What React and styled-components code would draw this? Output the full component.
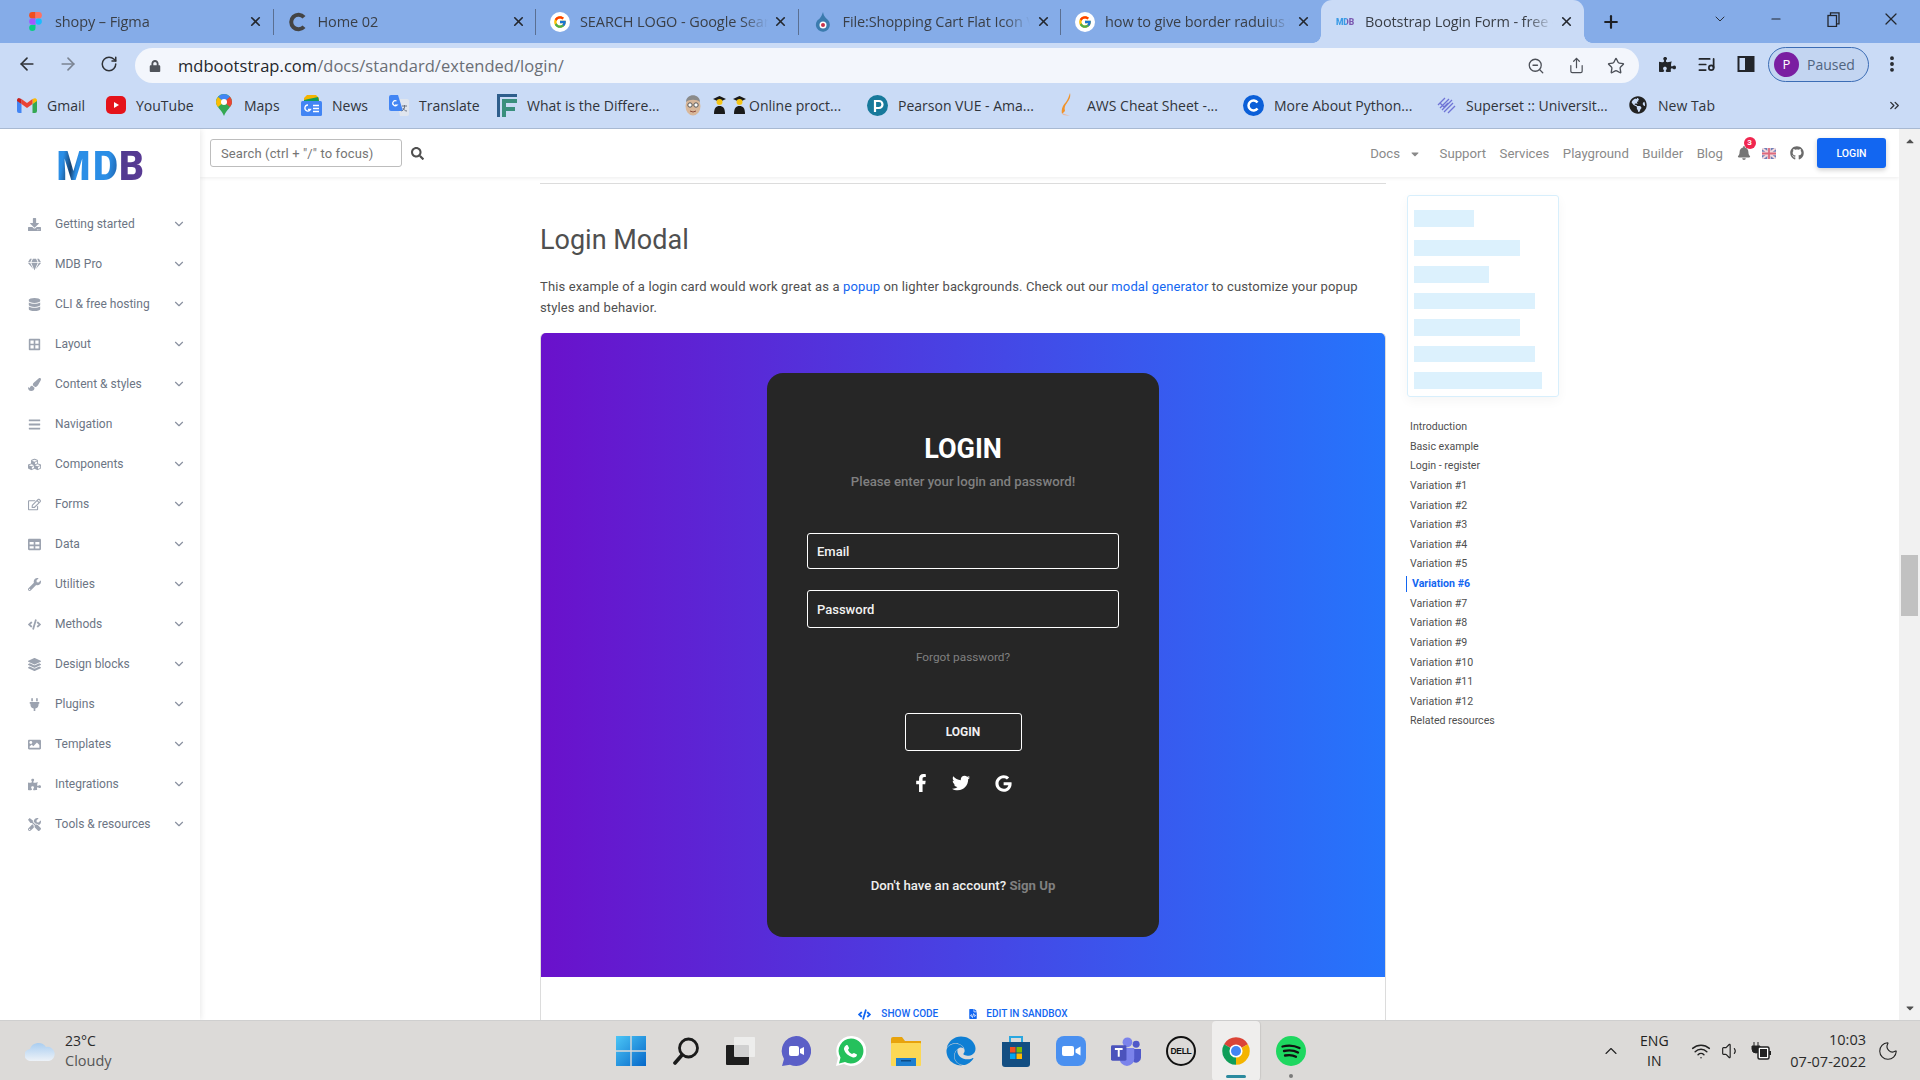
import React from "react";
import styled, { createGlobalStyle } from "styled-components";
import { ArrowLeft, ArrowRight, RotateCw, ZoomOut, Star, ListMusic, EllipsisVertical, ChevronDown, ChevronUp, X, Plus, Minus, Wifi, Volume1, Moon, ChevronsRight, Share } from "lucide-react";
import { FaDownload, FaGem, FaDatabase, FaBorderAll, FaPaintBrush, FaBars, FaCubes, FaRegEdit, FaTable, FaWrench, FaCode, FaLayerGroup, FaPlug, FaImage, FaPuzzlePiece, FaTools, FaSearch, FaBell, FaGithub, FaFacebookF, FaTwitter, FaGoogle, FaFileCode, FaCaretDown, FaCaretUp, FaLock, FaEdge, FaGlobeAmericas } from "react-icons/fa";
import { FcGoogle } from "react-icons/fc";

const UI = `"Open Sans", "Noto Sans", sans-serif`;
const RB = `Roboto, "Liberation Sans", sans-serif`;

const Global = createGlobalStyle`
  html, body { margin: 0; padding: 0; overflow: hidden; background: #fff; }
  * { box-sizing: border-box; }
`;
const Frame = styled.div`
  width: 1920px; height: 1080px; display: flex; flex-direction: column; overflow: hidden;
  font-family: ${RB};
`;

/* ---------- Chrome tabs ---------- */
const TabBar = styled.div`
  height: 43px; flex: none; background: #85ace8; display: flex; align-items: stretch; padding-left: 11px;
`;
const Tab = styled.div`
  position: relative; flex: 0 0 ${p => p.$w || 262.5}px; min-width: 0; display: flex; align-items: center; padding: 0 9px 0 14px;
  background: ${p => (p.$active ? "#cadbf6" : "transparent")};
  border-radius: ${p => (p.$active ? "11px 11px 0 0" : "0")};
  &::after {
    content: ""; position: absolute; right: 0; top: 9px; bottom: 8px; width: 1px;
    background: ${p => (p.$sep ? "#5a6f92" : "transparent")};
  }
  ${p => p.$active ? `
    &::before { content: ""; position: absolute; left: -8px; bottom: 0; width: 8px; height: 8px; background: radial-gradient(circle at 0 0, transparent 7.5px, #cadbf6 8px); }
    &::after { left: 100%; right: auto; top: auto; bottom: 0; width: 8px; height: 8px; background: radial-gradient(circle at 100% 0, transparent 7.5px, #cadbf6 8px); }
  ` : ""}
`;
const TabIcon = styled.span`
  flex: 0 0 20px; height: 20px; display: flex; align-items: center; justify-content: center; margin-right: 10px;
`;
const TabTitle = styled.span`
  flex: 1; min-width: 0; white-space: nowrap; overflow: hidden; font: 400 14.5px ${UI}; letter-spacing: -0.1px; color: #3a3f47;
  -webkit-mask-image: linear-gradient(to right, #000 86%, transparent 100%);
  mask-image: linear-gradient(to right, #000 86%, transparent 100%);
`;
const TabClose = styled.span`
  flex: 0 0 18px; display: flex; justify-content: center; margin-left: 4px; color: #23272e;
`;
const NewTab = styled.span`
  flex: 0 0 54px; display: flex; align-items: center; justify-content: center; color: #1d2026;
`;
const WinControls = styled.div`
  margin-left: auto; display: flex; align-items: center; color: #23272e; padding: 0 19px 5px 0;
`;
const WinBtn = styled.span`
  display: flex; justify-content: center; width: 20px; margin-left: ${p => p.$ml || 36}px;
`;

/* ---------- Toolbar ---------- */
const Toolbar = styled.div`
  height: 42px; flex: none; background: #cadbf6; display: flex; align-items: center; padding: 0 0 0 17px;
`;
const NavBtn = styled.span`
  flex: 0 0 20px; display: flex; justify-content: center; margin-right: 21px; color: ${p => p.$dim ? "#7b8493" : "#2f3237"};
`;
const UrlPill = styled.div`
  height: 35px; width: 1504px; margin: 5px 0 2px -5px; border-radius: 18px; background: #f3f6fc; display: flex; align-items: center; padding: 0 13px 0 14px;
`;
const Lock = styled.span`
  display: flex; color: #50545b; width: 29px;
`;
const Url = styled.span`
  font: 400 16.5px ${UI}; letter-spacing: 0.05px; color: #6a6e75; flex: 1;
  b { font-weight: 400; color: #23262b; }
`;
const PillIcon = styled.span`
  display: flex; justify-content: center; width: 20px; margin-left: 20px; color: #4c5058;
`;
const ToolIcon = styled.span`
  display: flex; justify-content: center; width: 20px; margin-left: ${p => p.$ml || 20}px; color: #22252a;
`;
const Profile = styled.div`
  margin-left: 12px; width: 101px; height: 35px; border-radius: 18px; border: 1.5px solid #3c6db5; background: #c3d5f1; display: flex; align-items: center; padding-left: 5px;
  font: 400 14px ${UI}; color: #50647f;
`;
const Avatar = styled.span`
  width: 25px; height: 25px; border-radius: 50%; background: #7a1ea1; color: #fff; display: flex; align-items: center; justify-content: center; font-size: 13px; margin-right: 8px;
`;

/* ---------- Bookmarks ---------- */
const Bookmarks = styled.div`
  height: 44px; flex: none; background: #cadbf6; border-bottom: 1px solid #a8b9d2; display: flex; align-items: center; padding: 0 18px 3px 17px; gap: 21px;
`;
const Mark = styled.div`
  display: flex; align-items: center; gap: ${p => p.$gap || 10}px; flex: none;
`;
const MarkIcon = styled.span`
  flex: 0 0 20px; height: 20px; display: flex; align-items: center; justify-content: center;
`;
const MarkLabel = styled.span`
  flex: 0 0 ${p => p.$w}px; min-width: 0; white-space: nowrap; font: 400 14px ${UI}; color: #30343b; display: flex; align-items: center;
`;
const GradPair = styled.span`
  display: flex; gap: 7px; margin-right: 3px;
`;
const MoreMarks = styled.span`
  margin-left: auto; display: flex; color: #30343b;
`;

/* ---------- Page ---------- */
const Page = styled.div`
  height: 891px; flex: none; display: flex; background: #fff; overflow: hidden;
`;
const Sidebar = styled.nav`
  flex: 0 0 200px; position: relative; z-index: 2; background: #fff; box-shadow: 1px 0 6px rgba(0,0,0,0.09); padding-top: 22px;
`;
const Logo = styled.div`
  height: 30px; margin-bottom: 23px; display: flex; justify-content: center; font: 900 42px/30px ${RB}; letter-spacing: -0.5px;
`;
const LogoLetter = styled.span`
  background: ${p => p.$bg}; -webkit-background-clip: text; background-clip: text; color: transparent; transform: scaleX(0.92); transform-origin: center;
`;
const NavRow = styled.div`
  height: 40px; display: flex; align-items: center; padding: 0 14px 0 24px; color: #6c7584; font-size: 12px;
`;
const NavIcon = styled.span`
  flex: 0 0 20px; display: flex; justify-content: center; margin-right: 11px; color: #9ca3b0;
`;
const NavText = styled.span`
  flex: 1;
`;
const NavChev = styled.span`
  display: flex; color: #8a91a0;
`;

const Main = styled.main`
  flex: 1; min-width: 0; display: flex; flex-direction: column;
`;
const Header = styled.header`
  height: 48px; flex: none; display: flex; align-items: center; padding: 0 13px 0 10px; box-shadow: 0 1px 4px rgba(0,0,0,0.08); position: relative; z-index: 1;
`;
const Search = styled.div`
  width: 192px; height: 28px; border: 1px solid #bdbdbd; border-radius: 3px; display: flex; align-items: center; padding-left: 10px; font: 400 13px ${RB}; color: #757575; letter-spacing: 0.01em;
`;
const SearchBtn = styled.span`
  display: flex; margin-left: 9px; color: #4f4f4f;
`;
const TopNav = styled.div`
  margin-left: auto; display: flex; align-items: center; gap: 13.5px;
`;
const TopLink = styled.span`
  font: 400 13.2px ${RB}; color: #8a8a8a; position: relative;
  svg { position: absolute; right: -21px; top: 2px; }
`;
const DocsLink = styled(TopLink)`
  margin-right: 26px;
`;
const Bell = styled.span`
  position: relative; display: flex; color: #757575; margin-right: -2px;
`;
const Badge = styled.span`
  position: absolute; top: -9px; right: -5px; width: 12px; height: 12px; border-radius: 50%; background: #f0264f; color: #fff; font: 700 8px/12px ${RB}; text-align: center;
`;
const LoginBtn = styled.span`
  width: 69px; height: 30px; border-radius: 3px; background: #1266f1; color: #fff; font: 500 10.5px/31px ${RB}; text-align: center; box-shadow: 0 2px 5px rgba(0,0,0,0.2);
`;
const Body = styled.div`
  flex: 1; display: flex; min-height: 0;
`;
const Article = styled.article`
  margin-left: 340px; flex: 0 0 846px; padding-top: 6px;
`;
const Rule = styled.div`
  height: 1px; background: #dcdcdc;
`;
const Title = styled.h2`
  margin: 40px 0 0; font: 400 27px/32px ${RB}; color: #4f4f4f;
`;
const Lead = styled.p`
  margin: 20px 0 15px; font: 400 13px/21px ${RB}; color: #4f4f4f; letter-spacing: 0.14px;
  a { color: #1266f1; text-decoration: none; }
`;
const Preview = styled.section`
  border: 1px solid #dcdcdc; border-bottom: 0; border-radius: 5px 5px 0 0; min-height: 800px;
`;
const Stage = styled.div`
  height: 644px; margin-top: -1px; background: linear-gradient(to right, #6a11cb, #2575fc); border-radius: 5px 5px 0 0; padding-top: 40px; display: flex; justify-content: center;
`;
const Card = styled.div`
  width: 392px; height: 564px; background: #262626; border-radius: 16px; display: flex; flex-direction: column; align-items: center; padding-top: 59px;
`;
const CardTitle = styled.div`
  font: 700 27px/34px ${RB}; color: #fff;
`;
const CardSub = styled.div`
  margin-top: 6px; font: 500 13.2px/20px ${RB}; color: #808080;
`;
const Field = styled.div`
  width: 312px; height: ${p => p.$h}px; margin-top: ${p => p.$mt}px; border: 1px solid #fff; border-radius: 3px; display: flex; align-items: center; padding: 1px 0 0 9px; font: 500 13px ${RB}; color: #f2f2f2;
`;
const Forgot = styled.div`
  margin-top: 20px; font: 400 11.8px/18px ${RB}; color: #808080;
`;
const OutlineBtn = styled.div`
  margin-top: 47px; width: 117px; height: 38px; border: 1px solid #fff; border-radius: 3px; font: 700 12px/36px ${RB}; color: #f0f0f0; text-align: center;
`;
const Socials = styled.div`
  margin: 22px 3px 0 0; height: 20px; display: flex; align-items: center; gap: 22px; color: #fff;
`;
const GoogleMark = styled(FaGoogle)`
  margin-left: 3px;
`;
const SignUp = styled.div`
  margin-top: 83px; font: 500 13.2px/20px ${RB}; color: #efefef;
  b { font-weight: 700; color: #808080; }
`;
const CodeBar = styled.div`
  padding-top: 29px; display: flex; justify-content: center; gap: 30px;
`;
const CodeLink = styled.span`
  display: flex; align-items: center; gap: ${p => p.$gap}px; height: 16px; font: 500 10px/16px ${RB}; color: #1266f1; text-transform: uppercase;
`;
const Aside = styled.aside`
  margin-left: 21px; padding-top: 18px; flex: 0 0 152px;
`;
const Skeleton = styled.div`
  width: 152px; height: 202px; border: 1px solid #d8effc; border-radius: 3px; padding: 14px 6px 0; display: flex; flex-direction: column; gap: 10px; box-shadow: 0 4px 12px rgba(0,0,0,0.04);
`;
const Bar = styled.div`
  flex: none; height: 16.5px; width: ${p => p.$w}px; background: #dcf1fd; margin-bottom: ${p => p.$mb || 0}px;
`;
const Toc = styled.ul`
  list-style: none; margin: 20px 0 0; padding: 0 0 0 3px;
`;
const TocItem = styled.li`
  height: 19.63px; font: ${p => (p.$active ? 700 : 400)} 10.6px/19.63px ${RB}; color: ${p => (p.$active ? "#1266f1" : "#4f4f4f")}; position: relative; padding-left: ${p => (p.$active ? 2 : 0)}px;
  ${p => p.$active ? `&::before { content: ""; position: absolute; left: -4px; top: 2px; bottom: 2px; width: 1px; background: #1266f1; }` : ""}
`;
const Scrollbar = styled.div`
  flex: 0 0 21px; background: #f1f1f1; display: flex; flex-direction: column; align-items: center; color: #505050; position: relative; z-index: 3;
`;
const ScrollArrow = styled.span`
  height: 24px; display: flex; align-items: center; justify-content: center; flex: none;
`;
const Thumb = styled.div`
  margin-top: 402px; width: 17px; height: 61px; background: #c1c1c1; flex: none;
`;
const Spacer = styled.div`
  flex: 1;
`;

/* ---------- Taskbar ---------- */
const Taskbar = styled.footer`
  height: 60px; flex: none; background: #dcdad8; border-top: 1px solid #cfcfcf; display: flex; align-items: center; font: 400 14px/21px ${UI}; color: #2b2b2b;
`;
const Weather = styled.div`
  flex: 0 0 616px; display: flex; align-items: center; padding-left: 25px; gap: 10px;
`;
const WeatherText = styled.div`
  line-height: 20px; small { display: block; font-size: 14.5px; color: #555; }
`;
const TaskIcons = styled.div`
  display: flex; gap: 25px; align-items: center;
`;
const TaskIcon = styled.span`
  position: relative; width: 30px; height: 36px; display: flex; align-items: center; justify-content: center; flex: none;
  ${p => p.$active ? `&::before { content: ""; position: absolute; left: -9px; right: -9px; top: -12px; bottom: -12px; background: #efeeed; border-radius: 4px; box-shadow: 1px 0 1px rgba(0,0,0,0.08); }
  &::after { content: ""; position: absolute; left: 5px; right: 5px; bottom: -9px; height: 3px; border-radius: 2px; background: #2b8a9e; }` : ""}
  ${p => p.$dot ? `&::after { content: ""; position: absolute; left: 13px; bottom: -9px; width: 4px; height: 4px; border-radius: 50%; background: #7a7a7a; }` : ""}
  svg { position: relative; }
`;
const Tray = styled.div`
  margin-left: auto; display: flex; align-items: center; padding-right: 21px;
`;
const TrayItem = styled.span`
  display: flex; justify-content: center; width: ${p => p.$w || 20}px; margin-left: ${p => p.$ml || 0}px; color: #222; text-align: center; line-height: 20px;
`;
const Clock = styled.div`
  margin-left: 19px; text-align: right; line-height: 22px; font-size: 14.5px; color: #2b2b2b;
`;

/* ---------- Drawn icons ---------- */
const RestoreIcon = () => (
  <svg width="13" height="15" viewBox="0 0 13 15" fill="none" stroke="#23272e" strokeWidth="1.3"><rect x="1" y="3.500" width="8.500" height="11" /><path d="M3.500 3.500V.8H12v11H9.500" /></svg>
);
const FigmaIcon = () => (
  <svg width="13" height="19" viewBox="0 0 12 18">
    <circle cx="9" cy="9" r="3" fill="#1abcfe" /><path d="M3 18a3 3 0 0 0 3-3v-3H3a3 3 0 0 0 0 6z" fill="#0acf83" />
    <path d="M0 9a3 3 0 0 1 3-3h3v6H3a3 3 0 0 1-3-3z" fill="#a259ff" /><path d="M0 3a3 3 0 0 1 3-3h3v6H3a3 3 0 0 1-3-3z" fill="#f24e1e" />
    <path d="M6 0h3a3 3 0 0 1 0 6H6z" fill="#ff7262" />
  </svg>
);
const CIcon = ({ c = "#444", size = 20 }) => (
  <svg width={size} height={size} viewBox="0 0 20 20"><path d="M16 5.200A7.300 7.300 0 1 0 16 14.800" fill="none" stroke={c} strokeWidth="4" /></svg>
);
const GoogleIcon = () => (
  <svg width="20" height="20" viewBox="0 0 20 20"><circle cx="10" cy="10" r="10" fill="#fff" /><g transform="translate(3 3)"><FcGoogle size={14} /></g></svg>
);
const WikiIcon = () => (
  <svg width="18" height="22" viewBox="0 0 18 22"><path d="M9 1c1 4 1 4 5 8a7 7 0 1 1-11 1c1-2 2-1 3-3 1-1 2-3 3-6z" fill="#3b7bae" /><circle cx="9" cy="14" r="3.500" fill="#fff" /><circle cx="9" cy="14" r="2" fill="#c8324a" /></svg>
);
const MdbTiny = styled.span`
  font: 900 8.500px ${RB}; letter-spacing: -0.2px; background: linear-gradient(to right, #3b9be5 60%, #7a57b0 60%); -webkit-background-clip: text; background-clip: text; color: transparent;
`;
const GmailIcon = () => (
  <svg width="20" height="15" viewBox="0 0 20 15"><path d="M0 2v11a2 2 0 0 0 2 2h2.500V6z" fill="#4285f4" /><path d="M20 2v11a2 2 0 0 1-2 2h-2.500V6z" fill="#34a853" /><path d="M15.500 1v5L20 3V2a2 2 0 0 0-3-1.500z" fill="#fbbc04" /><path d="M4.500 6 10 10l5.500-4V1L10 5 4.500 1z" fill="#ea4335" /><path d="M0 2v1l4.500 3V1L3 .4A2 2 0 0 0 0 2z" fill="#c5221f" /></svg>
);
const YouTubeIcon = () => (
  <svg width="20" height="18" viewBox="0 0 20 18"><rect y="0" width="20" height="18" rx="5" fill="#e5131a" /><path d="M8 6l5 3-5 3z" fill="#fff" /></svg>
);
const MapsIcon = () => (
  <svg width="16" height="22" viewBox="0 0 16 22"><path d="M8 0a8 8 0 0 1 8 8c0 5-6 8-8 14C6 16 0 13 0 8a8 8 0 0 1 8-8z" fill="#34a853" /><path d="M2 3a8 8 0 0 1 6-3 8 8 0 0 1 6 2.700L8 8z" fill="#4285f4" /><path d="M0 8a8 8 0 0 1 2-5l6 5-6 5a8 8 0 0 1-2-5z" fill="#fbbc04" /><path d="M14 2.700A8 8 0 0 1 16 8c0 2-1 3.500-2 5L8 8z" fill="#ea4335" /><circle cx="8" cy="8" r="3" fill="#fff" /></svg>
);
const NewsIcon = () => (
  <svg width="21" height="21" viewBox="0 0 21 21"><path d="M3 3l3-3h9l3 3v3H3z" fill="#f4b400" /><path d="M3 5l14-3 1 4H3z" fill="#0f9d58" /><rect y="6" width="21" height="15" rx="1.500" fill="#4285f4" /><path d="M7 10a3 3 0 1 0 2.500 4.500H7" fill="none" stroke="#fff" strokeWidth="1.300" /><path d="M12 10.500h6M12 13.500h6M12 16.500h6" stroke="#fff" strokeWidth="1.300" /></svg>
);
const TranslateIcon = () => (
  <svg width="20" height="21" viewBox="0 0 20 21"><path d="M7 4h11a2 2 0 0 1 2 2v13a2 2 0 0 1-2 2h-7z" fill="#dfe5ee" /><path d="M2 0h7l5 16H2a2 2 0 0 1-2-2V2a2 2 0 0 1 2-2z" fill="#4285f4" /><path d="M7.500 6A2.500 2.500 0 1 0 8 10H6" fill="none" stroke="#fff" strokeWidth="1.200" /><path d="M13 11h5M15.500 10v2c0 2-1 3-3 4M14 13c1 2 2 3 4 3" stroke="#6b7280" strokeWidth="1" fill="none" /></svg>
);
const WhatIcon = () => (
  <svg width="20" height="23" viewBox="0 0 20 23"><path d="M0 0h20v3H3v20H0z" fill="#2e5e8c" /><path d="M5 5h15v4H9v4h9v4H9v6H5z" fill="#3a8f7d" /></svg>
);
const FaceIcon = () => (
  <svg width="18" height="23" viewBox="0 0 18 23"><ellipse cx="9" cy="12" rx="7.500" ry="9.500" fill="#d8b79a" /><path d="M2 8c0-9 14-9 14 0-3-3-11-3-14 0z" fill="#8a8a8a" /><circle cx="6" cy="11" r="2.200" fill="#fff" stroke="#555" /><circle cx="12" cy="11" r="2.200" fill="#fff" stroke="#555" /><path d="M6 17q3 2 6 0" stroke="#8b4a3a" fill="none" /></svg>
);
const Grad = () => (
  <svg width="13" height="18" viewBox="0 0 13 18"><path d="M6.500 0 13 3 6.500 6 0 3z" fill="#1a1a1a" /><circle cx="6.500" cy="6" r="3" fill="#f5c518" /><path d="M1 18c0-6 2-8 5.500-8S12 12 12 18z" fill="#1a1a1a" /></svg>
);
const PearsonIcon = () => (
  <svg width="21" height="21" viewBox="0 0 21 21"><circle cx="10.500" cy="10.500" r="10.500" fill="#17799b" /><path d="M8 17V6h4a3 3 0 0 1 0 7H8" fill="none" stroke="#fff" strokeWidth="2.200" /></svg>
);
const AwsIcon = () => (
  <svg width="16" height="24" viewBox="0 0 16 24"><path d="M11 0c1 4-1 7-3 10-2 2-3 5-2 8l-3 3c-1-5 1-9 4-12 2-3 3-6 4-9z" fill="#f0932b" /><path d="M3 20l8 3-7-1z" fill="#e6b9a3" /></svg>
);
const CBlue = () => (
  <svg width="21" height="21" viewBox="0 0 21 21"><circle cx="10.500" cy="10.500" r="10.500" fill="#0b5fd8" /><path d="M14.500 7.500a5 5 0 1 0 0 6" fill="none" stroke="#fff" strokeWidth="2.500" /></svg>
);
const SupersetIcon = () => (
  <svg width="19" height="19" viewBox="0 0 19 19" fill="none" stroke="#6f74d6" strokeWidth="1.300"><path d="M1 9l7-7M3 12l9-9M5 14l10-10M7 16l9-9M11 17l7-7M3 7l4 4 4-4" /></svg>
);
const PanelIcon = () => (
  <svg width="18" height="18" viewBox="0 0 18 18"><rect x="1.500" y="2" width="15" height="14" fill="none" stroke="#22252a" strokeWidth="2" /><rect x="8" y="2" width="8" height="14" fill="#22252a" /></svg>
);
const FlagIcon = () => (
  <svg width="14" height="11" viewBox="0 0 14 11"><rect width="14" height="11" fill="#6f7fb8" /><path d="M0 0l14 11M14 0L0 11" stroke="#f3d9dd" strokeWidth="2" /><path d="M7 0v11M0 5.500h14" stroke="#f3d9dd" strokeWidth="3.500" /><path d="M7 0v11M0 5.500h14" stroke="#dc6a7e" strokeWidth="1.800" /></svg>
);
const CloudIcon = () => (
  <svg width="30" height="20" viewBox="0 0 30 20"><defs><linearGradient id="cl" x1="0" x2="0" y1="0" y2="1"><stop offset="0" stopColor="#a9cdf0" /><stop offset="1" stopColor="#edf2f8" /></linearGradient></defs><path d="M6 20a6 6 0 0 1-1-12 9 9 0 0 1 16-2 7 7 0 0 1 3 14z" fill="url(#cl)" /></svg>
);
const WinIcon = () => (
  <svg width="30" height="30" viewBox="0 0 30 30"><defs><linearGradient id="win" x1="0" x2="1" y1="0" y2="1"><stop offset="0" stopColor="#4cc6f6" /><stop offset="1" stopColor="#0567c9" /></linearGradient></defs><path d="M0 0h14.300v14.300H0zM15.700 0H30v14.300H15.700zM0 15.700h14.300V30H0zM15.700 15.700H30V30H15.700z" fill="url(#win)" /></svg>
);
const LensIcon = () => (
  <svg width="28" height="28" viewBox="0 0 28 28" fill="none" stroke="#1b1b1b"><circle cx="16.500" cy="11" r="9" strokeWidth="2.800" /><path d="M10 18l-7 8" strokeWidth="3.600" strokeLinecap="round" /></svg>
);
const TaskViewIcon = () => (
  <svg width="30" height="28" viewBox="0 0 30 28"><rect x="0" y="8" width="23" height="20" rx="1" fill="#1e1e1e" /><rect x="8" y="0" width="21" height="20" rx="1" fill="#f0f0f0" fillOpacity=".85" /></svg>
);
const ChatIcon = () => (
  <svg width="30" height="30" viewBox="0 0 30 30"><path d="M15 0a15 15 0 1 1-6 28.700L1 30l2-7A15 15 0 0 1 15 0z" fill="#5b5fc7" /><rect x="8" y="10" width="10" height="10" rx="2" fill="#fff" /><path d="M19 13l4-2v8l-4-2z" fill="#fff" /></svg>
);
const WhatsAppIcon = () => (
  <svg width="30" height="30" viewBox="0 0 30 30"><path d="M15 0a15 15 0 1 1-7 28L0 30l2-8A15 15 0 0 1 15 0z" fill="#fff" /><path d="M15 2.500a12.500 12.500 0 1 1-6 23.500L3 27.500 4.500 21.500A12.500 12.500 0 0 1 15 2.500z" fill="#25c15c" /><g transform="translate(7 7)" fill="#fff"><path d="M4 2c1 0 1.500 2 2 3 0 1-1 1.500-1 2 1 2 2 3 4 4 .6 0 1-1 2-1l3 1.500c0 2-2 3.500-4 3C5 13 2 10 1 6.500 .7 4.500 2.500 2 4 2z" /></g></svg>
);
const FolderIcon = () => (
  <svg width="30" height="30" viewBox="0 0 30 30"><path d="M0 3a2 2 0 0 1 2-2h9l3 4h16v3H0z" fill="#e8a30c" /><rect y="7" width="30" height="23" rx="1" fill="#fcd855" /><rect x="5" y="22" width="20" height="8" fill="#1d7fd1" /><rect x="10" y="24" width="10" height="1.500" fill="#0c4c87" /></svg>
);
const StoreIcon = () => (
  <svg width="28" height="32" viewBox="0 0 28 32"><path d="M8 7V2h12v5" fill="none" stroke="#2aa7e0" strokeWidth="2" /><path d="M0 7h28v22a3 3 0 0 1-3 3H3a3 3 0 0 1-3-3z" fill="#134e82" /><rect x="8" y="12" width="5.500" height="5.500" fill="#f25022" /><rect x="14.500" y="12" width="5.500" height="5.500" fill="#7fba00" /><rect x="8" y="18.500" width="5.500" height="5.500" fill="#00a4ef" /><rect x="14.500" y="18.500" width="5.500" height="5.500" fill="#ffb900" /></svg>
);
const ZoomIcon = () => (
  <svg width="30" height="30" viewBox="0 0 30 30"><rect width="30" height="30" rx="8" fill="#4a90f0" /><rect x="6" y="10" width="12" height="10" rx="2" fill="#fff" /><path d="M19.500 13.500l5-3v9l-5-3z" fill="#fff" /></svg>
);
const TeamsIcon = () => (
  <svg width="31" height="30" viewBox="0 0 31 30"><circle cx="17" cy="6" r="5" fill="#7b83eb" /><circle cx="26" cy="8" r="3.600" fill="#5059c9" /><path d="M21 13h10v9a5 5 0 0 1-8 4z" fill="#5059c9" /><path d="M9 12h15v11a7 7 0 0 1-15 0z" fill="#7b83eb" /><rect y="9" width="16" height="16" rx="1.500" fill="#4b53bc" /><path d="M4 13h8M8 13v8" stroke="#fff" strokeWidth="2" /></svg>
);
const DellBadge = styled.span`
  width: 30px; height: 30px; border: 2.500px solid #111; border-radius: 50%; display: flex; align-items: center; justify-content: center; font: 800 8.500px "Liberation Sans", sans-serif; letter-spacing: -0.3px; color: #111; flex: none;
`;
const ChromeIcon = () => (
  <svg width="30" height="30" viewBox="0 0 48 48"><path d="M24 24 4.950 13A22 22 0 0 1 43.050 13z" fill="#db4437" /><path d="M24 24 43.050 13A22 22 0 0 1 24 46z" fill="#f4b400" /><path d="M24 24V46A22 22 0 0 1 4.950 13z" fill="#0f9d58" /><circle cx="24" cy="24" r="10.500" fill="#fff" /><circle cx="24" cy="24" r="8" fill="#4285f4" /></svg>
);
const SpotifyIcon = () => (
  <svg width="30" height="30" viewBox="0 0 30 30"><circle cx="15" cy="15" r="15" fill="#1ed760" /><path d="M6.500 10.500c6-1.500 12-1 17 1.500M8 15c5-1 10-.7 14 1.500M9 19.500c4-.8 8-.5 11 1.200" fill="none" stroke="#111" strokeWidth="2.300" strokeLinecap="round" /></svg>
);
const BatteryIcon = () => (
  <svg width="20" height="20" viewBox="0 0 20 20"><path d="M3 1v4M7 1v4M1 5h8v3a4 4 0 0 1-8 0z" fill="#222" stroke="#222" /><rect x="7" y="6" width="11" height="12" rx="1.500" fill="#fff" stroke="#222" strokeWidth="1.500" /><rect x="9" y="8" width="7" height="8" fill="#222" /><rect x="18" y="10" width="2" height="4" fill="#222" /></svg>
);

const tabs = [
  { icon: <FigmaIcon />, title: "shopy – Figma", sep: true },
  { icon: <CIcon />, title: "Home 02", sep: true },
  { icon: <GoogleIcon />, title: "SEARCH LOGO - Google Search", sep: true },
  { icon: <WikiIcon />, title: "File:Shopping Cart Flat Icon Vector", sep: true },
  { icon: <GoogleIcon />, title: "how to give border raduius to a box", w: 260 },
];
const marks = [
  [<GmailIcon />, "Gmail", 38], [<YouTubeIcon />, "YouTube", 57], [<MapsIcon />, "Maps", 36], [<NewsIcon />, "News", 36],
  [<TranslateIcon />, "Translate", 57], [<WhatIcon />, "What is the Differe...", 135],
  [<FaceIcon />, <><GradPair><Grad /><Grad /></GradPair>Online proct...</>, 133, 10],
  [<PearsonIcon />, "Pearson VUE - Ama...", 138], [<AwsIcon />, "AWS Cheat Sheet -...", 135],
  [<CBlue />, "More About Python...", 141], [<SupersetIcon />, "Superset :: Universit...", 141], [<FaGlobeAmericas size={18} color="#222" />, "New Tab", 56],
];
const navItems = [
  [FaDownload, "Getting started"], [FaGem, "MDB Pro"], [FaDatabase, "CLI & free hosting"], [FaBorderAll, "Layout"], [FaPaintBrush, "Content & styles"],
  [FaBars, "Navigation"], [FaCubes, "Components"], [FaRegEdit, "Forms"], [FaTable, "Data"], [FaWrench, "Utilities"], [FaCode, "Methods"],
  [FaLayerGroup, "Design blocks"], [FaPlug, "Plugins"], [FaImage, "Templates"], [FaPuzzlePiece, "Integrations"], [FaTools, "Tools & resources"],
];
const bars = [[60, 3], [106], [75], [121], [106], [121], [128]];
const toc = ["Introduction", "Basic example", "Login - register", ...Array.from({ length: 12 }, (_, i) => `Variation #${i + 1}`), "Related resources"];

export default function App() {
  return (
    <Frame>
      <Global />
      <TabBar>
        {tabs.map(t => (
          <Tab key={t.title} $sep={t.sep} $w={t.w}>
            <TabIcon>{t.icon}</TabIcon>
            <TabTitle>{t.title}</TabTitle>
            <TabClose><X size={15} strokeWidth={2.6} /></TabClose>
          </Tab>
        ))}
        <Tab $active $w={263}>
          <TabIcon><MdbTiny>MDB</MdbTiny></TabIcon>
          <TabTitle>Bootstrap Login Form - free examples</TabTitle>
          <TabClose><X size={15} strokeWidth={2.6} /></TabClose>
        </Tab>
        <NewTab><Plus size={20} strokeWidth={2.6} /></NewTab>
        <WinControls>
          <WinBtn><ChevronDown size={16} strokeWidth={1.4} /></WinBtn>
          <WinBtn $ml={36}><Minus size={14} strokeWidth={1.8} /></WinBtn>
          <WinBtn $ml={37}><RestoreIcon /></WinBtn>
          <WinBtn $ml={38}><X size={20} strokeWidth={1.5} /></WinBtn>
        </WinControls>
      </TabBar>

      <Toolbar>
        <NavBtn><ArrowLeft size={20} /></NavBtn>
        <NavBtn $dim><ArrowRight size={20} /></NavBtn>
        <NavBtn><RotateCw size={18} /></NavBtn>
        <UrlPill>
          <Lock><FaLock size={12} /></Lock>
          <Url><b>mdbootstrap.com</b>/docs/standard/extended/login/</Url>
          <PillIcon><ZoomOut size={18} strokeWidth={1.7} /></PillIcon>
          <PillIcon><Share size={17} strokeWidth={1.7} /></PillIcon>
          <PillIcon><Star size={18} strokeWidth={1.8} /></PillIcon>
        </UrlPill>
        <ToolIcon $ml={18}><FaPuzzlePiece size={17} /></ToolIcon>
        <ToolIcon $ml={19}><ListMusic size={19} strokeWidth={2.2} /></ToolIcon>
        <ToolIcon $ml={20}><PanelIcon /></ToolIcon>
        <Profile><Avatar>P</Avatar>Paused</Profile>
        <ToolIcon $ml={13}><EllipsisVertical size={20} strokeWidth={2.6} /></ToolIcon>
      </Toolbar>

      <Bookmarks>
        {marks.map(([icon, label, w, gap], i) => (
          <Mark key={i} $gap={gap}>
            <MarkIcon>{icon}</MarkIcon>
            <MarkLabel $w={w}>{label}</MarkLabel>
          </Mark>
        ))}
        <MoreMarks><ChevronsRight size={15} strokeWidth={2.2} /></MoreMarks>
      </Bookmarks>

      <Page>
        <Sidebar>
          <Logo>
            <LogoLetter $bg="linear-gradient(100deg,#2b8ee6 20%,#16406e 45%,#2b8ee6 60%)">M</LogoLetter>
            <LogoLetter $bg="linear-gradient(100deg,#2b8ee6 60%,#1c5fa8)">D</LogoLetter>
            <LogoLetter $bg="linear-gradient(100deg,#4f3a8f,#5a3a94)">B</LogoLetter>
          </Logo>
          {navItems.map(([Icon, label]) => (
            <NavRow key={label}>
              <NavIcon><Icon size={13} /></NavIcon>
              <NavText>{label}</NavText>
              <NavChev><ChevronDown size={14} strokeWidth={2} /></NavChev>
            </NavRow>
          ))}
        </Sidebar>

        <Main>
          <Header>
            <Search>Search (ctrl + "/" to focus)</Search>
            <SearchBtn><FaSearch size={13} /></SearchBtn>
            <TopNav>
              <DocsLink>Docs<FaCaretDown size={12} /></DocsLink>
              <TopLink>Support</TopLink>
              <TopLink>Services</TopLink>
              <TopLink>Playground</TopLink>
              <TopLink>Builder</TopLink>
              <TopLink>Blog</TopLink>
              <Bell><FaBell size={14} /><Badge>3</Badge></Bell>
              <FlagIcon />
              <FaGithub size={14} color="#6b6b6b" />
              <LoginBtn>LOGIN</LoginBtn>
            </TopNav>
          </Header>
          <Body>
            <Article>
              <Rule />
              <Title>Login Modal</Title>
              <Lead>
                This example of a login card would work great as a <a>popup</a> on lighter backgrounds. Check out our <a>modal generator</a> to customize your popup styles and behavior.
              </Lead>
              <Preview>
                <Stage>
                  <Card>
                    <CardTitle>LOGIN</CardTitle>
                    <CardSub>Please enter your login and password!</CardSub>
                    <Field $h={36} $mt={41}>Email</Field>
                    <Field $h={38} $mt={21}>Password</Field>
                    <Forgot>Forgot password?</Forgot>
                    <OutlineBtn>LOGIN</OutlineBtn>
                    <Socials>
                      <FaFacebookF size={18} />
                      <FaTwitter size={18} />
                      <GoogleMark size={17} />
                    </Socials>
                    <SignUp>Don't have an account? <b>Sign Up</b></SignUp>
                  </Card>
                </Stage>
                <CodeBar>
                  <CodeLink $gap={10}><FaCode size={13} />Show code</CodeLink>
                  <CodeLink $gap={8}><FaFileCode size={10} />Edit in sandbox</CodeLink>
                </CodeBar>
              </Preview>
            </Article>
            <Aside>
              <Skeleton>
                {bars.map(([w, mb], i) => <Bar key={i} $w={w} $mb={mb} />)}
              </Skeleton>
              <Toc>
                {toc.map(t => <TocItem key={t} $active={t === "Variation #6"}>{t}</TocItem>)}
              </Toc>
            </Aside>
          </Body>
        </Main>
        <Scrollbar>
          <ScrollArrow><FaCaretUp size={12} /></ScrollArrow>
          <Thumb />
          <Spacer />
          <ScrollArrow><FaCaretDown size={12} /></ScrollArrow>
        </Scrollbar>
      </Page>

      <Taskbar>
        <Weather>
          <CloudIcon />
          <WeatherText>23°C<small>Cloudy</small></WeatherText>
        </Weather>
        <TaskIcons>
          <TaskIcon><WinIcon /></TaskIcon>
          <TaskIcon><LensIcon /></TaskIcon>
          <TaskIcon><TaskViewIcon /></TaskIcon>
          <TaskIcon><ChatIcon /></TaskIcon>
          <TaskIcon><WhatsAppIcon /></TaskIcon>
          <TaskIcon><FolderIcon /></TaskIcon>
          <TaskIcon><FaEdge size={30} color="#0f7fd4" /></TaskIcon>
          <TaskIcon><StoreIcon /></TaskIcon>
          <TaskIcon><ZoomIcon /></TaskIcon>
          <TaskIcon><TeamsIcon /></TaskIcon>
          <TaskIcon><DellBadge>DELL</DellBadge></TaskIcon>
          <TaskIcon $active><ChromeIcon /></TaskIcon>
          <TaskIcon $dot><SpotifyIcon /></TaskIcon>
        </TaskIcons>
        <Tray>
          <TrayItem><ChevronUp size={22} strokeWidth={1.3} /></TrayItem>
          <TrayItem $w={40} $ml={13}>ENG<br />IN</TrayItem>
          <TrayItem $ml={17}><Wifi size={20} strokeWidth={1.8} /></TrayItem>
          <TrayItem $ml={10}><Volume1 size={20} strokeWidth={1.4} /></TrayItem>
          <TrayItem $ml={10}><BatteryIcon /></TrayItem>
          <Clock>10:03<br />07-07-2022</Clock>
          <TrayItem $w={22} $ml={11}><Moon size={22} strokeWidth={1.2} /></TrayItem>
        </Tray>
      </Taskbar>
    </Frame>
  );
}
